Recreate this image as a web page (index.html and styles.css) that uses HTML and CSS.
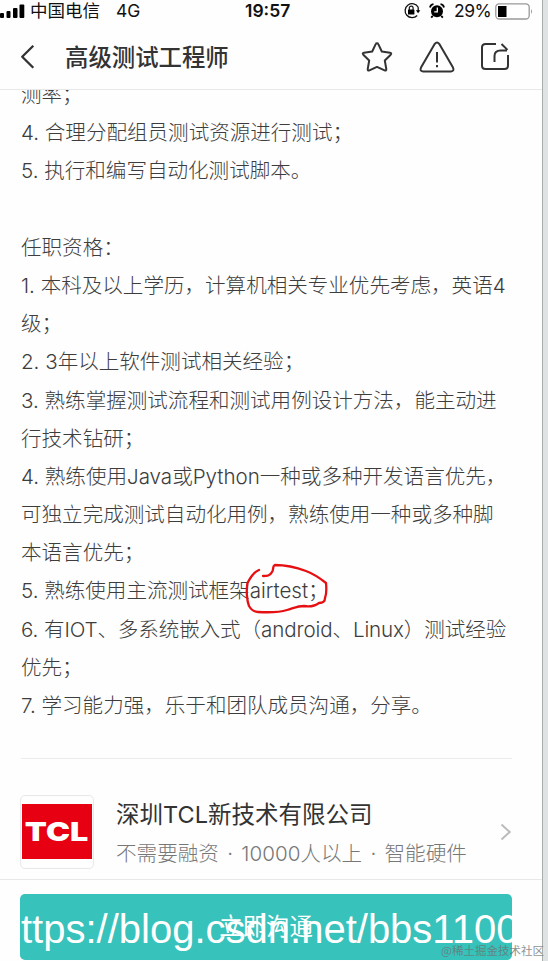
FILE: index.html
```html
<!DOCTYPE html>
<html lang="zh-CN">

<head>
    <meta charset="UTF-8">
    <meta name="viewport" content="width=device-width, initial-scale=1.0">
    <title>高级测试工程师</title>
    <link rel="stylesheet" href="styles.css">
</head>

<body>
    <div class="screen">
        <div class="status-bar">
            <svg class="signal" width="25" height="16" viewBox="0 0 25 16">
                <rect x="0" y="11" width="4" height="5" rx="1" />
                <rect x="6.5" y="9" width="4" height="7" rx="1" />
                <rect x="13" y="6" width="4.5" height="10" rx="1" />
                <rect x="19.5" y="2.5" width="4.8" height="13.5" rx="1" />
            </svg>
            <span class="carrier">中国电信</span>
            <span class="network">4G</span>
            <span class="time">19:57</span>
            <svg class="lock" width="18" height="18" viewBox="0 0 18 18">
                <path d="M15.2 5.2A7 7 0 1 0 14.2 13.5M15.2 5.2V9.5" fill="none" stroke="#111" stroke-width="1.3" />
                <path d="M12.9 8.3h4.4l-2.2 3z" />
                <rect x="5" y="7.5" width="6.4" height="5" rx=".6" />
                <path d="M6.3 8V6a1.9 1.9 0 0 1 3.8 0v2" fill="none" stroke="#111" stroke-width="1.2" />
            </svg>
            <svg class="alarm" width="16" height="16" viewBox="0 0 16 16">
                <circle cx="8" cy="8.2" r="6" />
                <path d="M1 4.5A4 4 0 0 1 4.5 1.2M15 4.5A4 4 0 0 0 11.5 1.2M3.8 12.8l-1.6 1.8M12.2 12.8l1.6 1.8" fill="none" stroke="#000" stroke-width="1.8" />
                <path d="M8.3 4.6v4.2H5.2" fill="none" stroke="#fff" stroke-width="1.3" />
            </svg>
            <span class="percent">29%</span>
            <svg class="battery" width="39" height="17" viewBox="0 0 39 17">
                <rect x=".8" y=".8" width="33.4" height="15.2" rx="3.5" fill="#fff" stroke="#999" stroke-width="1.3" />
                <rect x="3" y="3" width="8.5" height="11" />
                <path d="M36 6q2 2.3 0 5z" fill="#999" />
            </svg>
        </div>

        <header class="title-bar">
            <svg class="back" width="16" height="26" viewBox="0 0 16 26">
                <path d="M13.3 1.8L2.2 12.8l11.1 11" />
            </svg>
            <h1>高级测试工程师</h1>
            <svg class="action" width="34" height="34" viewBox="0 0 34 34">
                <path d="M17 3.2q.9 0 1.3.9l3.5 7.4 8.2 1.2q2 .4.7 2l-5.9 5.8 1.5 8.6q.1 2-1.7 1.3L17 26.900l-7.6 3.500q-1.8.7-1.7-1.3l1.5-8.6-5.9-5.8q-1.3-1.6.7-2l8.2-1.2 3.5-7.4q.4-.9 1.3-.9z" />
            </svg>
            <svg class="action" width="36" height="34" viewBox="0 0 36 34">
                <path d="M15.8 3.8q2.2-2.8 4.4 0L34 27.6q1.6 3.6-2 3.8H4q-3.6-.2-2-3.8zM18 12v10.5M18 25v2.3" />
            </svg>
            <svg class="action share" width="30" height="34" viewBox="0 0 30 34">
                <path d="M16 4H5.500Q2 4 2 7.500v18Q2 29 5.500 29h19q3.500 0 3.500-3.500V15M14.500 22v-6q0-5.500 6-5.500h6.500M21.500 4l6 5.900" />
            </svg>
        </header>

        <main class="detail">
            <p>测率；</p>
            <p>4. 合理分配组员测试资源进行测试；</p>
            <p>5. 执行和编写自动化测试脚本。</p>
            <p class="blank"></p>
            <p>任职资格：</p>
            <p>1. 本科及以上学历，计算机相关专业优先考虑，英语4</p>
            <p>级；</p>
            <p>2. 3年以上软件测试相关经验；</p>
            <p>3. 熟练掌握测试流程和测试用例设计方法，能主动进</p>
            <p>行技术钻研；</p>
            <p>4. 熟练使用Java或Python一种或多种开发语言优先，</p>
            <p>可独立完成测试自动化用例，熟练使用一种或多种脚</p>
            <p>本语言优先；</p>
            <p>5. 熟练使用主流测试框架<span class="marked">airtest；<svg class="circle" width="86" height="54" viewBox="0 0 86 54">
                <path d="M15 8C10 10 6 16 3.500 21C2 29 3 39 5 44C8 49 11 50 14 50C24 50.500 34 51 43 48C50 46 54 44 60 44C66 45 71 44 75 41C79 41 81 39 81 36C83 31 82.500 26 82 21C77 17 70 12 62 9C54 6 43 3 31 3C28 4 30 8 28 10C26 14 23 14 19 14" />
            </svg></span></p>
            <p class="tight">6. 有IOT、多系统嵌入式（android、Linux）测试经验</p>
            <p>优先；</p>
            <p>7. 学习能力强，乐于和团队成员沟通，分享。</p>
        </main>

        <section class="company">
            <div class="logo">
                <div class="logo-red"><span>TCL</span></div>
            </div>
            <div class="company-info">
                <h2>深圳TCL新技术有限公司</h2>
                <div class="meta">不需要融资 · 10000人以上 · 智能硬件</div>
            </div>
            <svg class="arrow" width="12" height="18" viewBox="0 0 12 18">
                <path d="M1.500 1.500L9.700 9l-8.200 7.500" />
            </svg>
        </section>

        <footer class="footer">
            <div class="chat-button">
                <span>立即沟通</span>
                <div class="url-mark">ttps://blog.csdn.net/bbs1100</div>
            </div>
        </footer>
    </div>
    <div class="community-mark">@稀土掘金技术社区</div>
</body>

</html>
```

FILE: styles.css
```css
* {
    box-sizing: border-box;
}

body {
    margin: 0;
    height: 961px;
    overflow: hidden;
    position: relative;
    background-color: #dfe3e3;
    font-family: Inter, "Noto Sans CJK SC", sans-serif;
}

.screen {
    width: 543px;
    height: 961px;
    display: flex;
    flex-direction: column;
    background-color: #fefefe;
    border-right: 1px solid #a9adad;
    overflow: hidden;
}

.status-bar {
    flex: none;
    height: 24px;
    display: flex;
    align-items: center;
    padding-bottom: 2px;
    color: #111;
    font-size: 17.500px;
    line-height: 22px;
    white-space: nowrap;
}

.signal {
    margin-bottom: 2px;
}

.carrier {
    margin-left: 5px;
}

.network {
    margin-left: 16px;
    width: 129px;
}

.time {
    width: 158px;
    font-weight: 600;
}

.alarm {
    margin-left: 8px;
}

.percent {
    margin-left: 9px;
    width: 41px;
    letter-spacing: -0.5px;
}

.title-bar {
    flex: none;
    height: 66px;
    display: flex;
    align-items: center;
    padding: 0 32px 0 20px;
    border-bottom: 1px solid #e8e8e8;
}

.title-bar svg {
    fill: none;
    stroke: #333;
    stroke-width: 2;
    stroke-linejoin: round;
}

.title-bar .back {
    stroke-width: 2.300;
}

.title-bar h1 {
    flex: 1;
    margin: 0 0 2px 29px;
    color: #333;
    font-size: 23.400px;
    font-weight: 500;
}

.action {
    margin-left: 25px;
}

.detail {
    flex: none;
    height: 669px;
    margin: 0 30px 0 21px;
    border-bottom: 1px solid #ececec;
    color: #3d3d3d;
    font-size: 20.550px;
    font-weight: 300;
    line-height: 38.200px;
    white-space: nowrap;
    overflow: hidden;
}

.detail p {
    height: 38.200px;
    margin: 0;
}

.detail p:first-child {
    margin-top: -14px;
}

.detail .tight {
    letter-spacing: -0.1px;
}

.marked {
    position: relative;
}

/* hand drawn circle around the keyword */
.circle {
    position: absolute;
    left: -6px;
    top: -16px;
    fill: none;
    stroke: #e60f12;
    stroke-width: 2.300;
    stroke-linecap: round;
}

.company {
    flex: none;
    height: 121px;
    display: flex;
    align-items: center;
    padding: 26px 30px 0 20px;
    border-bottom: 1px solid #e8e8e8;
}

.logo {
    width: 74px;
    height: 74px;
    padding: 8px 1px;
    border: 1px solid #e8e8e8;
    border-radius: 5px;
}

.logo-red {
    height: 55px;
    display: flex;
    align-items: center;
    justify-content: center;
    background-color: #e60012;
    color: #fff;
    font-size: 26px;
    font-weight: 900;
}

.logo-red span {
    transform: scaleX(1.24);
}

.company-info {
    flex: 1;
    margin-left: 22px;
    padding-top: 4px;
    white-space: nowrap;
}

.company h2 {
    margin: 0;
    color: #333;
    font-size: 23.500px;
    font-weight: 400;
    line-height: 38px;
}

.meta {
    color: #777;
    font-size: 20.600px;
    font-weight: 300;
    line-height: 39px;
    word-spacing: 2.500px;
}

.arrow {
    fill: none;
    stroke: #bbb;
    stroke-width: 2;
}

.footer {
    padding: 14px 30px 0 20px;
}

.chat-button {
    position: relative;
    height: 66px;
    border-radius: 5px;
    background-color: #37c2bb;
    color: #fff;
    text-align: center;
    font-size: 23.400px;
    line-height: 66px;
    overflow: hidden;
}

.url-mark {
    position: absolute;
    left: 1px;
    top: 2px;
    font-family: "Liberation Sans", sans-serif;
    font-size: 40px;
    white-space: nowrap;
}

.community-mark {
    position: absolute;
    right: 4px;
    bottom: 2px;
    color: rgba(110, 115, 115, 0.8);
    font-family: "Noto Sans CJK SC", sans-serif;
    font-size: 11.500px;
    font-weight: 400;
    line-height: 18px;
}
```
